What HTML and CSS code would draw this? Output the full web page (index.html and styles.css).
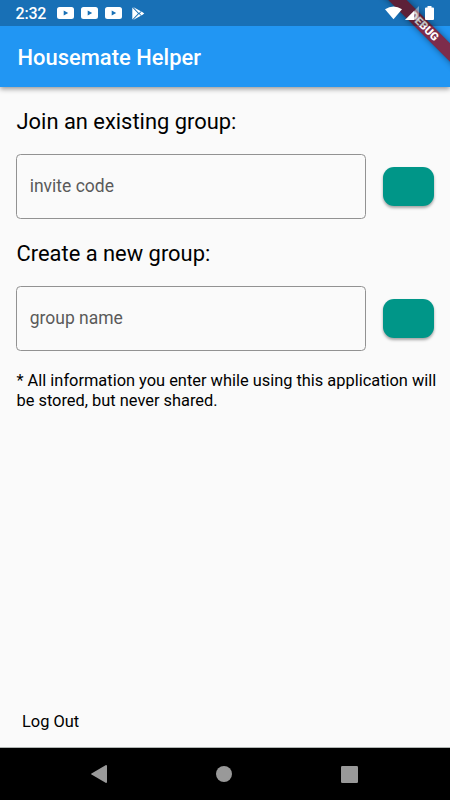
FILE: index.html
```html
<!DOCTYPE html>
<html lang="en">
<head>
    <meta charset="UTF-8">
    <meta name="viewport" content="width=device-width, initial-scale=1.0">
    <title>Housemate Helper</title>
    <link rel="stylesheet" href="styles.css">
</head>
<body>
    <div class="screen">
        <header class="header">
            <div class="status-bar">
                <span class="clock">2:32</span>
                <svg class="video" viewBox="0 0 17 12"><path fill-rule="evenodd" d="M2.5 0h12q2.5 0 2.5 2.5v7q0 2.5-2.5 2.5h-12Q0 12 0 9.5v-7Q0 0 2.5 0zM6.7 3.4v5.2L11.2 6z"/></svg>
                <svg class="video" viewBox="0 0 17 12"><path fill-rule="evenodd" d="M2.5 0h12q2.5 0 2.5 2.5v7q0 2.5-2.5 2.5h-12Q0 12 0 9.5v-7Q0 0 2.5 0zM6.7 3.4v5.2L11.2 6z"/></svg>
                <svg class="video" viewBox="0 0 17 12"><path fill-rule="evenodd" d="M2.5 0h12q2.5 0 2.5 2.5v7q0 2.5-2.5 2.5h-12Q0 12 0 9.5v-7Q0 0 2.5 0zM6.7 3.4v5.2L11.2 6z"/></svg>
                <svg class="play" viewBox="0 0 13 13"><path d="M.3.5v12L6 6.5zM1.1 0l7.8 4.2-2 1.8zM1.1 13l7.8-4.2-2-1.8zM9.6 4.6l2.7 1.9-2.7 1.9-2-1.9z"/></svg>
                <div class="system-icons">
                    <svg width="17" height="14" viewBox="0 0 18 14"><path d="M0 3Q9-2.6 18 3L9 13.6z"/></svg>
                    <svg width="14" height="14" viewBox="0 0 14 14"><path opacity=".4" d="M14 0v14H0z"/><path d="M9 5v9H0z"/></svg>
                    <svg width="9" height="14" viewBox="0 0 9 14"><path d="M2.5 0h4v1.5H8q1 0 1 1V13q0 1-1 1H1q-1 0-1-1V2.5q0-1 1-1h1.5z"/></svg>
                </div>
            </div>
            <div class="app-bar">
                <h1>Housemate Helper</h1>
            </div>
            <div class="debug-banner">DEBUG</div>
        </header>

        <main class="content">
            <h2>Join an existing group:</h2>
            <div class="form-row">
                <input type="text" placeholder="invite code">
                <button class="submit" aria-label="Join"></button>
            </div>
            <h2>Create a new group:</h2>
            <div class="form-row">
                <input type="text" placeholder="group name">
                <button class="submit" aria-label="Create"></button>
            </div>
            <p class="note">* All information you enter while using this application will be stored, but never shared.</p>
            <a class="logout">Log Out</a>
        </main>

        <nav class="nav-bar">
            <svg width="16" height="18" viewBox="0 0 16 18"><path d="M15 0q1 0 1 1v16q0 1-1 1L.5 9.6q-.8-.6 0-1.2z"/></svg>
            <svg width="16" height="16" viewBox="0 0 16 16"><circle cx="8" cy="8" r="8"/></svg>
            <svg width="17" height="17" viewBox="0 0 17 17"><rect width="17" height="17" rx="1.3"/></svg>
        </nav>
    </div>
</body>
</html>
```
FILE: styles.css
```css
* {
    box-sizing: border-box;
}
body {
    margin: 0;
    font-family: Roboto, sans-serif;
    background: #fafafa;
    color: #000;
}
.screen {
    width: 450px;
    height: 800px;
    display: flex;
    flex-direction: column;
    overflow: hidden;
}
.header {
    position: relative;
    height: 87px;
    background: #2196f3;
    color: #fff;
    box-shadow: 0 2px 5px rgba(0, 0, 0, 0.4);
}
.status-bar {
    position: relative;
    z-index: 1;
    height: 26px;
    padding: 0 16px 0 15.5px;
    display: flex;
    align-items: center;
    background: rgba(0, 0, 0, 0.25);
}
.status-bar svg {
    display: block;
    fill: #fff;
}
.clock {
    width: 41.5px;
    font-size: 16px;
    font-weight: 500;
    line-height: 26px;
    padding-top: 2px;
    letter-spacing: -0.2px;
}
.video {
    width: 17px;
    height: 12px;
    margin-right: 7px;
}
.play {
    width: 13px;
    height: 13px;
    margin-left: 3px;
}
.system-icons {
    display: flex;
    margin-left: auto;
    gap: 3px;
}
.system-icons svg:last-child {
    margin-left: 3px;
}
.app-bar {
    height: 61px;
    padding-left: 17.5px;
    display: flex;
    align-items: center;
}
h1 {
    margin: 2px 0 0;
    font-size: 21.9px;
    font-weight: 500;
    letter-spacing: 0.03px;
}
/* sits under the status bar so its top end is dimmed too */
.debug-banner {
    position: absolute;
    left: 369px;
    top: 19.5px;
    width: 110px;
    height: 13px;
    transform: rotate(45deg);
    background: #7d2c4b;
    box-shadow: 0 0 6px rgba(0, 0, 0, 0.45);
    font-size: 11.2px;
    font-weight: 900;
    line-height: 13px;
    text-align: center;
}
.content {
    flex: 1;
    display: flex;
    flex-direction: column;
    padding: 21px 12px 15px 16.5px;
}
h2 {
    margin: 0;
    font-size: 21.9px;
    font-weight: 400;
    line-height: 28px;
}
.form-row {
    display: flex;
    align-items: center;
    gap: 16px;
    margin: 18px 0 21px -0.3px;
}
input {
    width: 350px;
    height: 65px;
    padding: 0 12.5px 1px;
    border: 1px solid #929292;
    border-radius: 4.5px;
    background: transparent;
    font: 17.5px Roboto, sans-serif;
}
input::placeholder {
    color: #5a5a5a;
    opacity: 1;
}
.submit {
    width: 51px;
    height: 39px;
    margin-left: 0.3px;
    border: none;
    border-radius: 11px;
    background: #009688;
    box-shadow: 0 2px 3px rgba(0, 0, 0, 0.35);
}
.note {
    margin: -1.5px 0 0;
    font-size: 16.4px;
    line-height: 20px;
}
.logout {
    margin-top: auto;
    padding-left: 5.5px;
    font-size: 16.4px;
    line-height: 20px;
}
.nav-bar {
    height: 53px;
    padding: 0 92px 0 91px;
    display: flex;
    align-items: center;
    justify-content: space-between;
    background: #000;
    border-top: 1px solid #b0b5b3;
}
.nav-bar svg {
    fill: #999;
}
```
